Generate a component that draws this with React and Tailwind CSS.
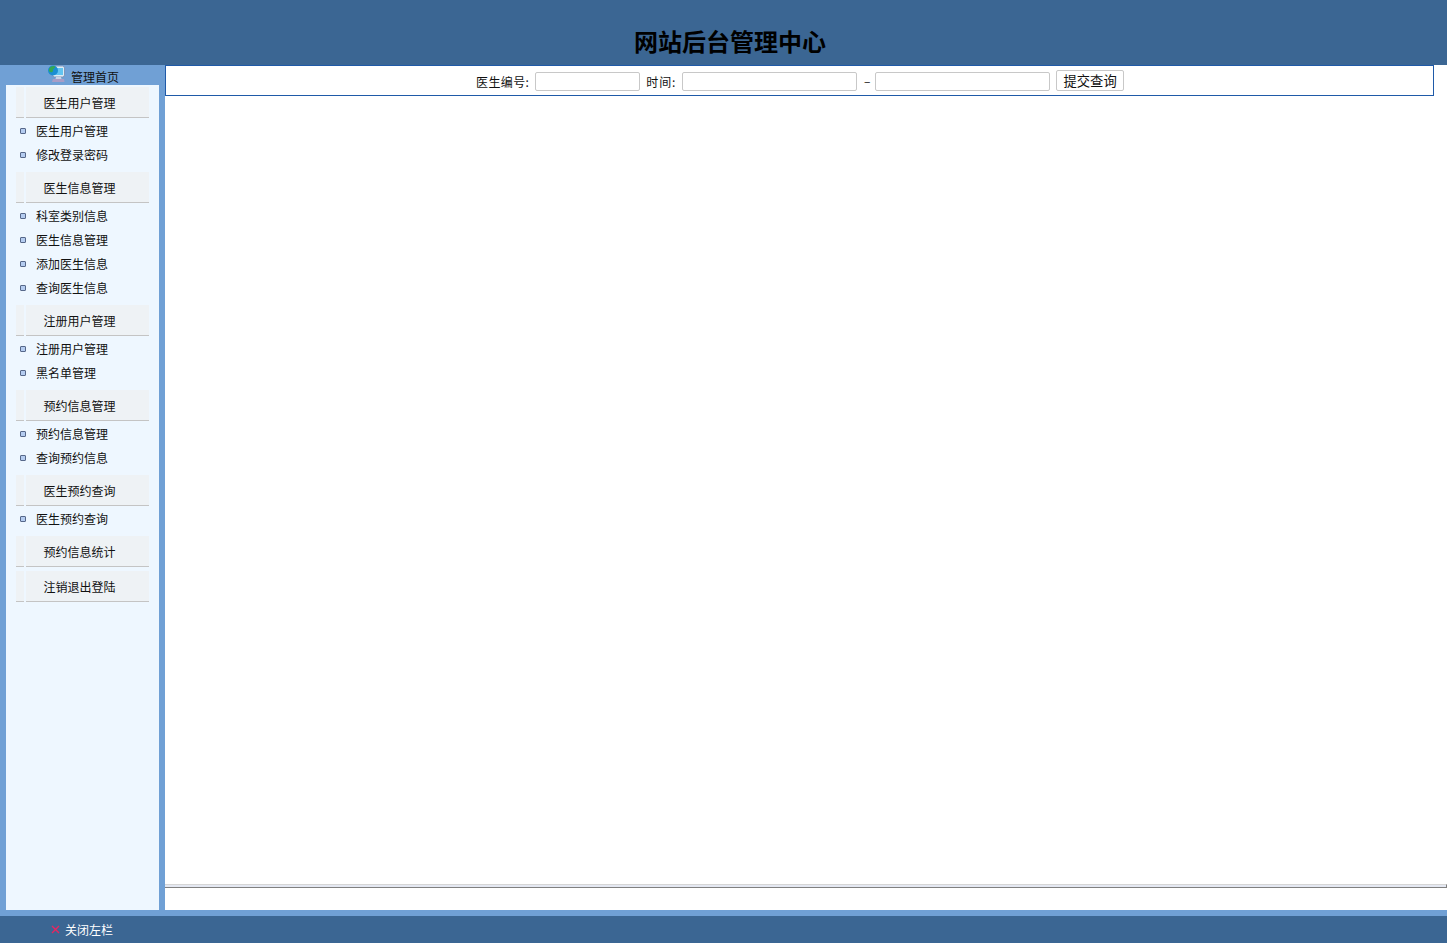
function Head({ children, mt = 'mt-0' }) {
  return (
    <div className={`flex h-[31px] ${mt} mx-[10px] w-[133px]`}>
      <div className="w-[8px] h-full bg-[#eef2f5] border-b border-[#c4c4c4]" />
      <div className="ml-[2px] flex-1 h-full bg-[#eef2f5] border-b border-[#c4c4c4] flex items-center justify-center text-[12px] text-[#111] pr-[16px] pt-[1px]">
        {children}
      </div>
    </div>
  );
}

function Item({ children }) {
  return (
    <div className="flex items-center h-[24px] pl-[14px] text-[12px] text-[#111]">
      <span className="w-[6px] h-[6px] rounded-[1px] bg-[#b4ccf0] border border-[#56688a]" />
      <span className="ml-[10px]">{children}</span>
    </div>
  );
}

const groups = [
  { t: '医生用户管理', items: ['医生用户管理', '修改登录密码'] },
  { t: '医生信息管理', items: ['科室类别信息', '医生信息管理', '添加医生信息', '查询医生信息'] },
  { t: '注册用户管理', items: ['注册用户管理', '黑名单管理'] },
  { t: '预约信息管理', items: ['预约信息管理', '查询预约信息'] },
  { t: '医生预约查询', items: ['医生预约查询'] },
];

export default function App() {
  return (
    <div className="w-[1447px] h-[943px] flex flex-col overflow-hidden bg-white font-['Noto_Sans_CJK_SC','Liberation_Sans',sans-serif]">
      <header className="h-[65px] bg-[#3b6693] shrink-0 pl-[634px]">
        <h1 className="pt-[24px] text-[24px] leading-[34px] font-bold text-black whitespace-nowrap">网站后台管理中心</h1>
      </header>

      <div className="flex-1 flex min-h-0">
        <aside className="w-[165px] shrink-0 bg-[#70a0d5] flex flex-col px-[6px]">
          <div className="h-[20px] flex items-start pl-[42px]">
            <svg width="17" height="18" viewBox="0 0 17 18" className="shrink-0">
              <rect x="4.5" y="1" width="12" height="11" rx="2" fill="#dcecf6" stroke="#7d8fb0" strokeWidth="0.9" />
              <rect x="6.5" y="3" width="8.5" height="7" fill="#62c4f0" />
              <path d="M8 12h5l.5 2h-6z" fill="#c9d2e4" />
              <path d="M5 14h11l.5 3H4z" fill="#a99dc6" />
              <circle cx="5" cy="5.5" r="5" fill="#1b8ed2" />
              <path d="M1.2 3.2C3.2.8 5.6.4 7.4 1.4 6.6 3.8 5.2 3 5 5.4s-2.6 2.6-4.2.6z" fill="#35a853" />
            </svg>
            <span className="ml-[6px] mt-[3px] text-[12px] leading-[18px] text-[#111]">管理首页</span>
          </div>
          <nav className="flex-1 bg-[#eef7ff] pt-[2px]">
            {groups.map((g) => (
              <div key={g.t} className="mb-[5px]">
                <Head>{g.t}</Head>
                <div className="pt-[1px]">
                  {g.items.map((it) => <Item key={it}>{it}</Item>)}
                </div>
              </div>
            ))}
            <Head>预约信息统计</Head>
            <Head mt="mt-[4px]">注销退出登陆</Head>
          </nav>
        </aside>

        <main className="flex-1 flex flex-col min-w-0 bg-white">
          <form className="h-[31px] w-[1269px] border border-[#1f5aa8] flex items-center text-[12px] text-[#111] pl-[310px] shrink-0">
            <span className="mt-[2px] tracking-[0.4px]">医生编号:</span>
            <input className="ml-[6px] w-[105px] h-[19px] mt-[1px] bg-white border border-[#c8c8c8] rounded-[2px]" />
            <span className="ml-[6px] mt-[2px] tracking-[0.8px]">时间:</span>
            <input className="ml-[6px] w-[175px] h-[19px] mt-[1px] bg-white border border-[#c8c8c8] rounded-[2px]" />
            <span className="ml-[7px] w-[11px]">–</span>
            <input className="w-[175px] h-[19px] mt-[1px] bg-white border border-[#c8c8c8] rounded-[2px]" />
            <button type="button" className="ml-[6px] w-[68px] h-[21px] bg-white border border-[#c8c8c8] rounded-[2px] text-[13.33px] text-[#111]">提交查询</button>
          </form>
          <div className="flex-1" />
          <div className="h-[4px] bg-[#e4e8f2] border-t border-t-[#d6d6d6] border-b border-b-[#808080] border-r border-r-[#808080] shrink-0" />
          <div className="h-[22px] shrink-0" />
        </main>
      </div>

      <div className="h-[6px] bg-[#70a0d5] shrink-0" />
      <footer className="h-[27px] bg-[#3b6693] flex items-center pl-[51px] text-[12px] text-white shrink-0">
        <svg width="9" height="9" viewBox="0 0 9 9"><path d="M1 1l7 7M8 1l-7 7" stroke="#e8255f" strokeWidth="1.4" /></svg>
        <span className="ml-[5px]">关闭左栏</span>
      </footer>
    </div>
  );
}
